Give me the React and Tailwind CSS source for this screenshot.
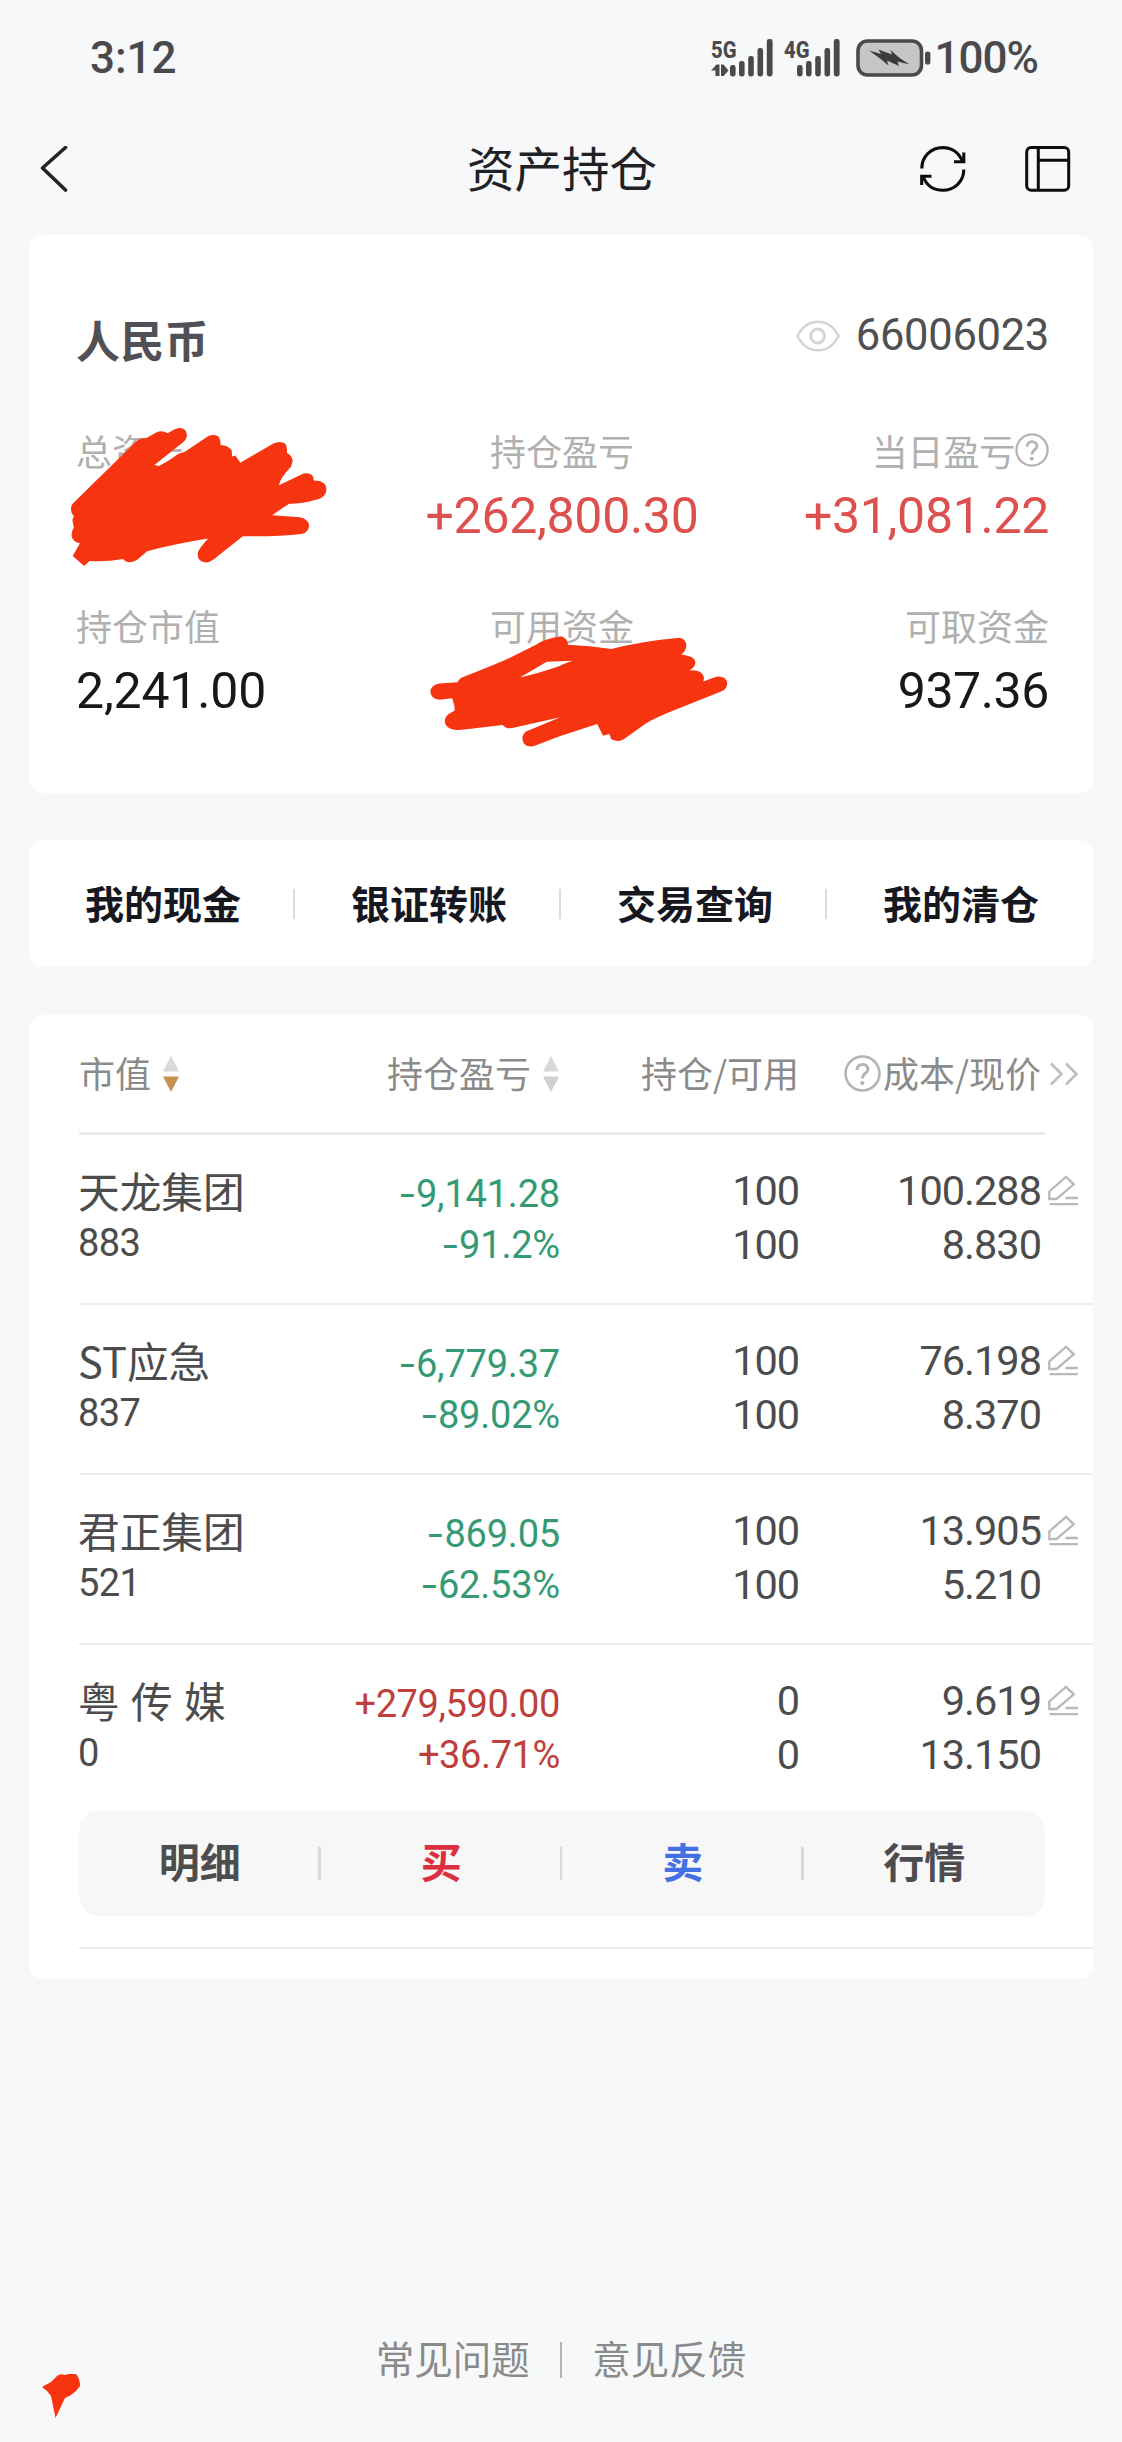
const CJK = "font-['Noto_Sans_CJK_SC',sans-serif]";
const NUM = "font-['Roboto','Noto_Sans_CJK_SC',sans-serif]";

const holdings = [
  { name: '天龙集团', value: '883', profit: '-9,141.28', rate: '-91.2%', qty: '100', avail: '100', cost: '100.288', price: '8.830' },
  { name: 'ST应急', value: '837', profit: '-6,779.37', rate: '-89.02%', qty: '100', avail: '100', cost: '76.198', price: '8.370' },
  { name: '君正集团', value: '521', profit: '-869.05', rate: '-62.53%', qty: '100', avail: '100', cost: '13.905', price: '5.210' },
  { name: '粤 传 媒', value: '0', profit: '+279,590.00', rate: '+36.71%', qty: '0', avail: '0', cost: '9.619', price: '13.150' },
];

function Signal({ label, arrows, barsX }) {
  return (
    <svg width={barsX + 44} height="62" viewBox={`0 -12 ${barsX + 44} 62`} fill="#4a4a4c">
      <text x="0" y="18.500" fontFamily="Roboto, sans-serif" fontWeight="800" fontSize="24.500" textLength="25.500" lengthAdjust="spacingAndGlyphs">{label}</text>
      {arrows && <path d="M0 31.500L5.500 25.500H8.500V37H4.500V31.500ZM10 25.500H12.500L17.500 31.500L12.500 37H10Z" />}
      <g transform={`translate(${barsX} 0)`}>
        <rect x="0" y="26" width="5.600" height="11.500" rx="2.400" />
        <rect x="9" y="22" width="5.600" height="15.500" rx="2.400" />
        <rect x="18.200" y="17" width="5.600" height="20.500" rx="2.400" />
        <rect x="27.500" y="9" width="5.600" height="28.500" rx="2.400" />
        <rect x="36.800" y="0" width="5.800" height="37.500" rx="2.400" />
      </g>
    </svg>
  );
}

function Battery() {
  return (
    <svg width="76" height="38" viewBox="0 0 76 38" fill="none">
      <rect x="2" y="2" width="63.500" height="34" rx="9.500" fill="#c6c6c8" stroke="#4a4a4c" strokeWidth="3.600" />
      <rect x="69" y="12.500" width="5.400" height="13" rx="2.600" fill="#4a4a4c" />
      <path d="M13 11.500L25 15L22.500 10.500L36 15.500L34.500 11L43 18.500L53.500 25.500L41.500 22.500L43 27L31 21.500L32.500 26.500L24 19.500Z" fill="#3c3c3e" />
    </svg>
  );
}

function Refresh() {
  return (
    <svg width="46" height="46" viewBox="0 0 46 46" fill="none" stroke="#0c0c0e" strokeWidth="3.100">
      <path d="M1.800 22.500C1.800 10 11.500 1.600 22.800 1.600C32 1.600 39 7 42.300 15" />
      <path d="M43.800 6.500V15.700H34" />
      <path d="M43.800 23.500C43.800 36 34 44.200 22.800 44.200C13.500 44.200 6.500 39 3.300 31" />
      <path d="M1.700 39V30.200H11.500" />
    </svg>
  );
}

function LayoutIcon() {
  return (
    <svg width="46" height="46" viewBox="0 0 46 46" fill="none" stroke="#0c0c0e" strokeWidth="3">
      <rect x="1.700" y="1.600" width="42" height="42.600" rx="4.500" />
      <path d="M13.300 1.600V44M13.300 14.200H43.500" />
    </svg>
  );
}

function Help({ className }) {
  return (
    <svg className={className} viewBox="0 0 36 36" fill="none" stroke="#b4b4b4" strokeWidth="2.500">
      <circle cx="18" cy="18" r="16.500" />
      <path d="M12.700 14.500C12.700 11 15 9.200 18 9.200S23.300 11 23.300 13.800C23.300 17.500 17.800 18 17.800 22.800" strokeWidth="3" />
      <circle cx="17.800" cy="27.300" r="2.100" fill="#b4b4b4" stroke="none" />
    </svg>
  );
}

function Sorter({ down }) {
  return (
    <svg width="16" height="36" viewBox="0 0 16 36">
      <path d="M8 0L16 15.500H0Z" fill="#d9d9d9" />
      <path d="M8 36L16 20.500H0Z" fill={down} />
    </svg>
  );
}

function EditIcon() {
  return (
    <svg width="30" height="31" viewBox="0 0 30 31" fill="none" stroke="#b9b9b9" strokeWidth="2.300">
      <path d="M1.300 24V16.500L18 1.800L25.800 9.300L8.500 24Z" />
      <path d="M17.500 23H30M1.500 29.200H30" />
    </svg>
  );
}

function Label({ children, className = '' }) {
  return <div className={`${CJK} text-[36px] leading-[40px] text-[#b0b0b0] whitespace-nowrap ${className}`}>{children}</div>;
}

function Amount({ children, className = '' }) {
  return <div className={`${NUM} mt-[21px] text-[50px] leading-[50px] whitespace-nowrap ${className}`}>{children}</div>;
}

function SummaryCard() {
  return (
    <section className="relative mx-auto h-[558px] w-[1064px] rounded-[14px] bg-white pl-[47px] pr-[44px]">
      <div className="flex h-[195px] items-start justify-between">
        <h2 className={`${CJK} mt-[80px] text-[44px] font-bold leading-[48px] tracking-[0.3px] text-[#505055]`}>人民币</h2>
        <div className="mt-[76px] flex items-center">
          <svg width="44" height="32" viewBox="0 0 44 32" fill="none" stroke="#d4d4d4" strokeWidth="2.500">
            <path d="M1.500 16C6 7 13 1.700 22 1.700S38 7 42.500 16C38 25 31 30.300 22 30.300S6 25 1.500 16Z" />
            <ellipse cx="21.500" cy="16" rx="6.800" ry="7" strokeWidth="3" />
          </svg>
          <span className={`${NUM} ml-[16px] text-[43.5px] leading-[50px] tracking-[-0.3px] text-[#505050]`}>66006023</span>
        </div>
      </div>
      <div className="grid h-[175px] grid-cols-[300px_372px_301px]">
        <div>
          <Label>总资产</Label>
        </div>
        <div className="text-center">
          <Label>持仓盈亏</Label>
          <Amount className="tracking-[-0.3px] text-[#dc504e]">+262,800.30</Amount>
        </div>
        <div className="flex flex-col items-end">
          <div className="flex items-center">
            <Label className="tracking-[-0.2px]">当日盈亏</Label>
            <Help className="h-[34px] w-[34px]" />
          </div>
          <Amount className="tracking-[-0.3px] text-[#dc504e]">+31,081.22</Amount>
        </div>
      </div>
      <div className="grid grid-cols-[300px_372px_301px]">
        <div>
          <Label>持仓市值</Label>
          <Amount className="tracking-[-0.2px] text-[#17181b]">2,241.00</Amount>
        </div>
        <div className="text-center">
          <Label>可用资金</Label>
        </div>
        <div className="text-right">
          <Label>可取资金</Label>
          <Amount className="tracking-[-0.4px] text-[#17181b]">937.36</Amount>
        </div>
      </div>
      <svg className="absolute left-[38px] top-[188px] h-[147px] w-[265px]" viewBox="190 580 740 440" preserveAspectRatio="none" fill="#f63510">
        <path d="M201 838Q201 825 212 815L385 633Q395 624 412 625L438 609Q455 600 471 611L488 600Q500 592 512 596Q525 602 525 618Q524 630 515 637L434 706L447 709Q480 690 500 673L519 666L585 619Q600 612 612 620Q619 628 619 646Q640 647 650 662L651 680L660 677L674 699L765 642Q785 632 800 642Q806 655 804 670Q820 678 820 695L815 712Q785 745 782 766L843 735Q860 726 874 736Q880 745 879 752Q900 752 909 762Q918 775 912 790Q905 805 885 810Q850 822 811 822Q790 835 763 856L840 862Q866 868 866 888Q864 908 845 912Q780 920 681 919L600 988Q582 1003 565 994Q552 985 556 965Q560 955 584 926Q490 942 414 964L385 990Q360 1005 347 987Q300 996 253 993L238 1008L206 978L226 940Q208 938 203 920Q202 905 209 892L205 870L209 858Q201 850 201 838Z" />
      </svg>
      <svg className="absolute left-[396px] top-[398px] h-[117px] w-[308px]" viewBox="1190 160 860 350" preserveAspectRatio="none" fill="#f63510">
        <path fillRule="evenodd" d="M1205 335Q1207 315 1230 311L1281 307Q1285 295 1300 290Q1350 270 1420 238L1500 195Q1530 175 1570 170Q1588 175 1589 195Q1650 197 1710 208Q1790 185 1900 174Q1918 176 1920 198Q1918 215 1905 225Q1945 228 1945 250Q1943 265 1928 272Q1965 268 1969 295L1967 305L2005 290Q2033 288 2034 312Q2032 330 2015 336L1870 398Q1810 425 1795 440L1745 478Q1730 488 1710 478L1705 462L1687 467L1671 432L1568 468L1500 496Q1480 505 1467 492Q1455 470 1472 455L1568 412L1440 443Q1418 450 1407 435L1300 449Q1260 455 1248 435Q1240 415 1256 402L1273 392L1272 378L1266 355L1230 360Q1207 358 1205 335ZM1455 293L1530 246L1602 243Q1570 255 1568 258Q1500 283 1455 293Z" />
      </svg>
    </section>
  );
}

function QuickLinks() {
  return (
    <nav className="mx-auto mt-[47px] grid h-[127px] w-[1064px] grid-cols-4 items-center rounded-[14px] bg-white">
      {['我的现金', '银证转账', '交易查询', '我的清仓'].map((item, i) => (
        <div key={item} className="relative flex items-center justify-center">
          <span className={`${CJK} -mt-[4px] ml-[2px] text-[39px] font-bold leading-[44px] text-[#17181f]`}>{item}</span>
          {i < 3 && <i className="absolute right-0 h-[30px] w-[2.5px] bg-[#dcdcde]" />}
        </div>
      ))}
    </nav>
  );
}

function Signed({ children }) {
  const minus = children.startsWith('-');
  return (
    <span className={minus ? 'tracking-[-0.2px]' : 'tracking-[-0.4px]'}>
      {minus && <b className="mr-[2px] inline-block origin-right scale-x-140 font-normal">-</b>}
      {minus ? children.slice(1) : children}
    </span>
  );
}

function HoldingRow({ row }) {
  const tone = row.profit.startsWith('+') ? 'text-[#be403c]' : 'text-[#359a74]';
  return (
    <div className="flex text-[#4c4c4c]">
      <div className="w-[180px] pt-[29px]">
        <div className={`${CJK} -ml-[1px] whitespace-pre text-[41.7px] leading-[52px] [word-spacing:2px]`}>{row.name}</div>
        <div className={`${NUM} -ml-[1px] mt-[1px] text-[38px] leading-[52px] tracking-[-0.6px]`}>{row.value}</div>
      </div>
      <div className={`${NUM} ${tone} flex w-[301px] flex-col items-end pt-[34px] text-[38px] leading-[51px] whitespace-nowrap`}>
        <Signed>{row.profit}</Signed>
        <Signed>{row.rate}</Signed>
      </div>
      <div className={`${NUM} w-[239px] pt-[29px] text-right text-[41.5px] leading-[54px] tracking-[-1.1px]`}>
        <div>{row.qty}</div>
        <div>{row.avail}</div>
      </div>
      <div className={`${NUM} w-[242px] pt-[29px] text-right text-[41.5px] leading-[54px] tracking-[-1px]`}>
        <div>{row.cost}</div>
        <div>{row.price}</div>
      </div>
      <div className="pl-[7px] pt-[40px]">
        <EditIcon />
      </div>
    </div>
  );
}

function HoldingsCard() {
  return (
    <section className="mx-auto mt-[48px] h-[964px] w-[1064px] rounded-[14px] bg-white pl-[50px]">
      <div className={`${CJK} flex h-[120px] w-[966px] border-b-[3px] border-[#ececec] text-[36px] leading-[40px] text-[#8b8b8b] whitespace-nowrap`}>
        <div className="flex w-[270px] shrink-0 items-center">
          <span className="-mt-[3px]">市值</span>
          <span className="ml-[12px]"><Sorter down="#c4924f" /></span>
        </div>
        <div className="flex w-[210px] shrink-0 items-center justify-end">
          <span className="-mt-[3px]">持仓盈亏</span>
          <span className="ml-[12px]"><Sorter down="#d0d0d0" /></span>
        </div>
        <div className="flex w-[240px] shrink-0 items-center justify-end">
          <span className="-mt-[3px]">持仓/可用</span>
        </div>
        <div className="flex w-[242px] shrink-0 items-center justify-end">
          <Help className="mr-[2px] h-[37px] w-[37px]" />
          <span className="-mt-[3px]">成本/现价</span>
        </div>
        <div className="flex shrink-0 items-center pl-[9px]">
          <svg width="28" height="24" viewBox="0 0 28 24" fill="none" stroke="#bdbdbd" strokeWidth="2.600">
            <path d="M1 1.500L11.500 12L1 22.500M16 1.500L26.500 12L16 22.500" />
          </svg>
        </div>
      </div>
      {holdings.map((row, i) => (
        <div key={row.name} className={i < 3 ? 'h-[170px] border-b-2 border-[#ededed]' : 'h-[304px] border-b-2 border-[#ededed]'}>
          <HoldingRow row={row} />
          {i === 3 && (
            <div className="mt-[29px] grid h-[105px] w-[966px] grid-cols-4 items-center rounded-[20px] bg-[#f7f7f7]">
              {[['明细', 'text-[#4d4d50]'], ['买', 'text-[#dc3040]'], ['卖', 'text-[#4470e4]'], ['行情', 'text-[#4d4d50]']].map(([text, color], j) => (
                <div key={text} className="relative flex items-center justify-center">
                  <span className={`${CJK} ${color} -mt-[7px] text-[41px] font-bold leading-[46px]`}>{text}</span>
                  {j < 3 && <i className="absolute right-0 h-[33px] w-[2.5px] bg-[#d9d9d9]" />}
                </div>
              ))}
            </div>
          )}
        </div>
      ))}
    </section>
  );
}

export default function App() {
  return (
    <div className="flex h-[2442px] w-[1122px] flex-col overflow-hidden bg-[#f7f8fa]">
      <header className="flex h-[116px] items-center justify-between pl-[90px] pr-[84px] text-[#4a4a4c]">
        <span className={`${NUM} text-[44px] font-medium leading-[50px]`}>3:12</span>
        <div className="flex items-center">
          <Signal label="5G" arrows barsX={19} />
          <span className="ml-[10px] flex"><Signal label="4G" barsX={13} /></span>
          <span className="ml-[15px] flex"><Battery /></span>
          <span className={`${NUM} ml-[3px] text-[44px] font-medium leading-[50px] tracking-[-1px]`}>100%</span>
        </div>
      </header>
      <div className="grid h-[119px] grid-cols-[1fr_auto_1fr] items-start pl-[40px] pr-[51px] pt-[30px]">
        <svg width="30" height="46" viewBox="0 0 30 46" fill="none" stroke="#222326" strokeWidth="3.600" strokeLinecap="round">
          <path d="M25.500 1.500L2.500 22L25.500 44" strokeLinejoin="round" />
        </svg>
        <h1 className={`${CJK} -mt-[3px] ml-[13px] text-[47.5px] leading-[48px] text-[#202124]`}>资产持仓</h1>
        <div className="flex justify-end gap-[59px]">
          <Refresh />
          <LayoutIcon />
        </div>
      </div>
      <SummaryCard />
      <QuickLinks />
      <HoldingsCard />
      <footer className={`${CJK} relative mt-[356px] flex h-[50px] items-center justify-center text-[38.5px] leading-[44px] text-[#8a8a8a]`}>
        <span className="-mt-[6px]">常见问题</span>
        <i className="mx-[30px] h-[36px] w-[2.5px] bg-[#b4b4b4]" />
        <span className="-mt-[6px]">意见反馈</span>
        <svg className="absolute left-[42px] top-[39px]" width="38" height="44" viewBox="0 0 38 44" fill="#f63510">
          <path d="M0 13L9 8L15 2Q18 -1 23 1Q28 -1 34 0Q38 5 38 12Q34 18 29 21L23 24L13.500 44L9 22Q5 16 0 13Z" />
        </svg>
      </footer>
    </div>
  );
}
